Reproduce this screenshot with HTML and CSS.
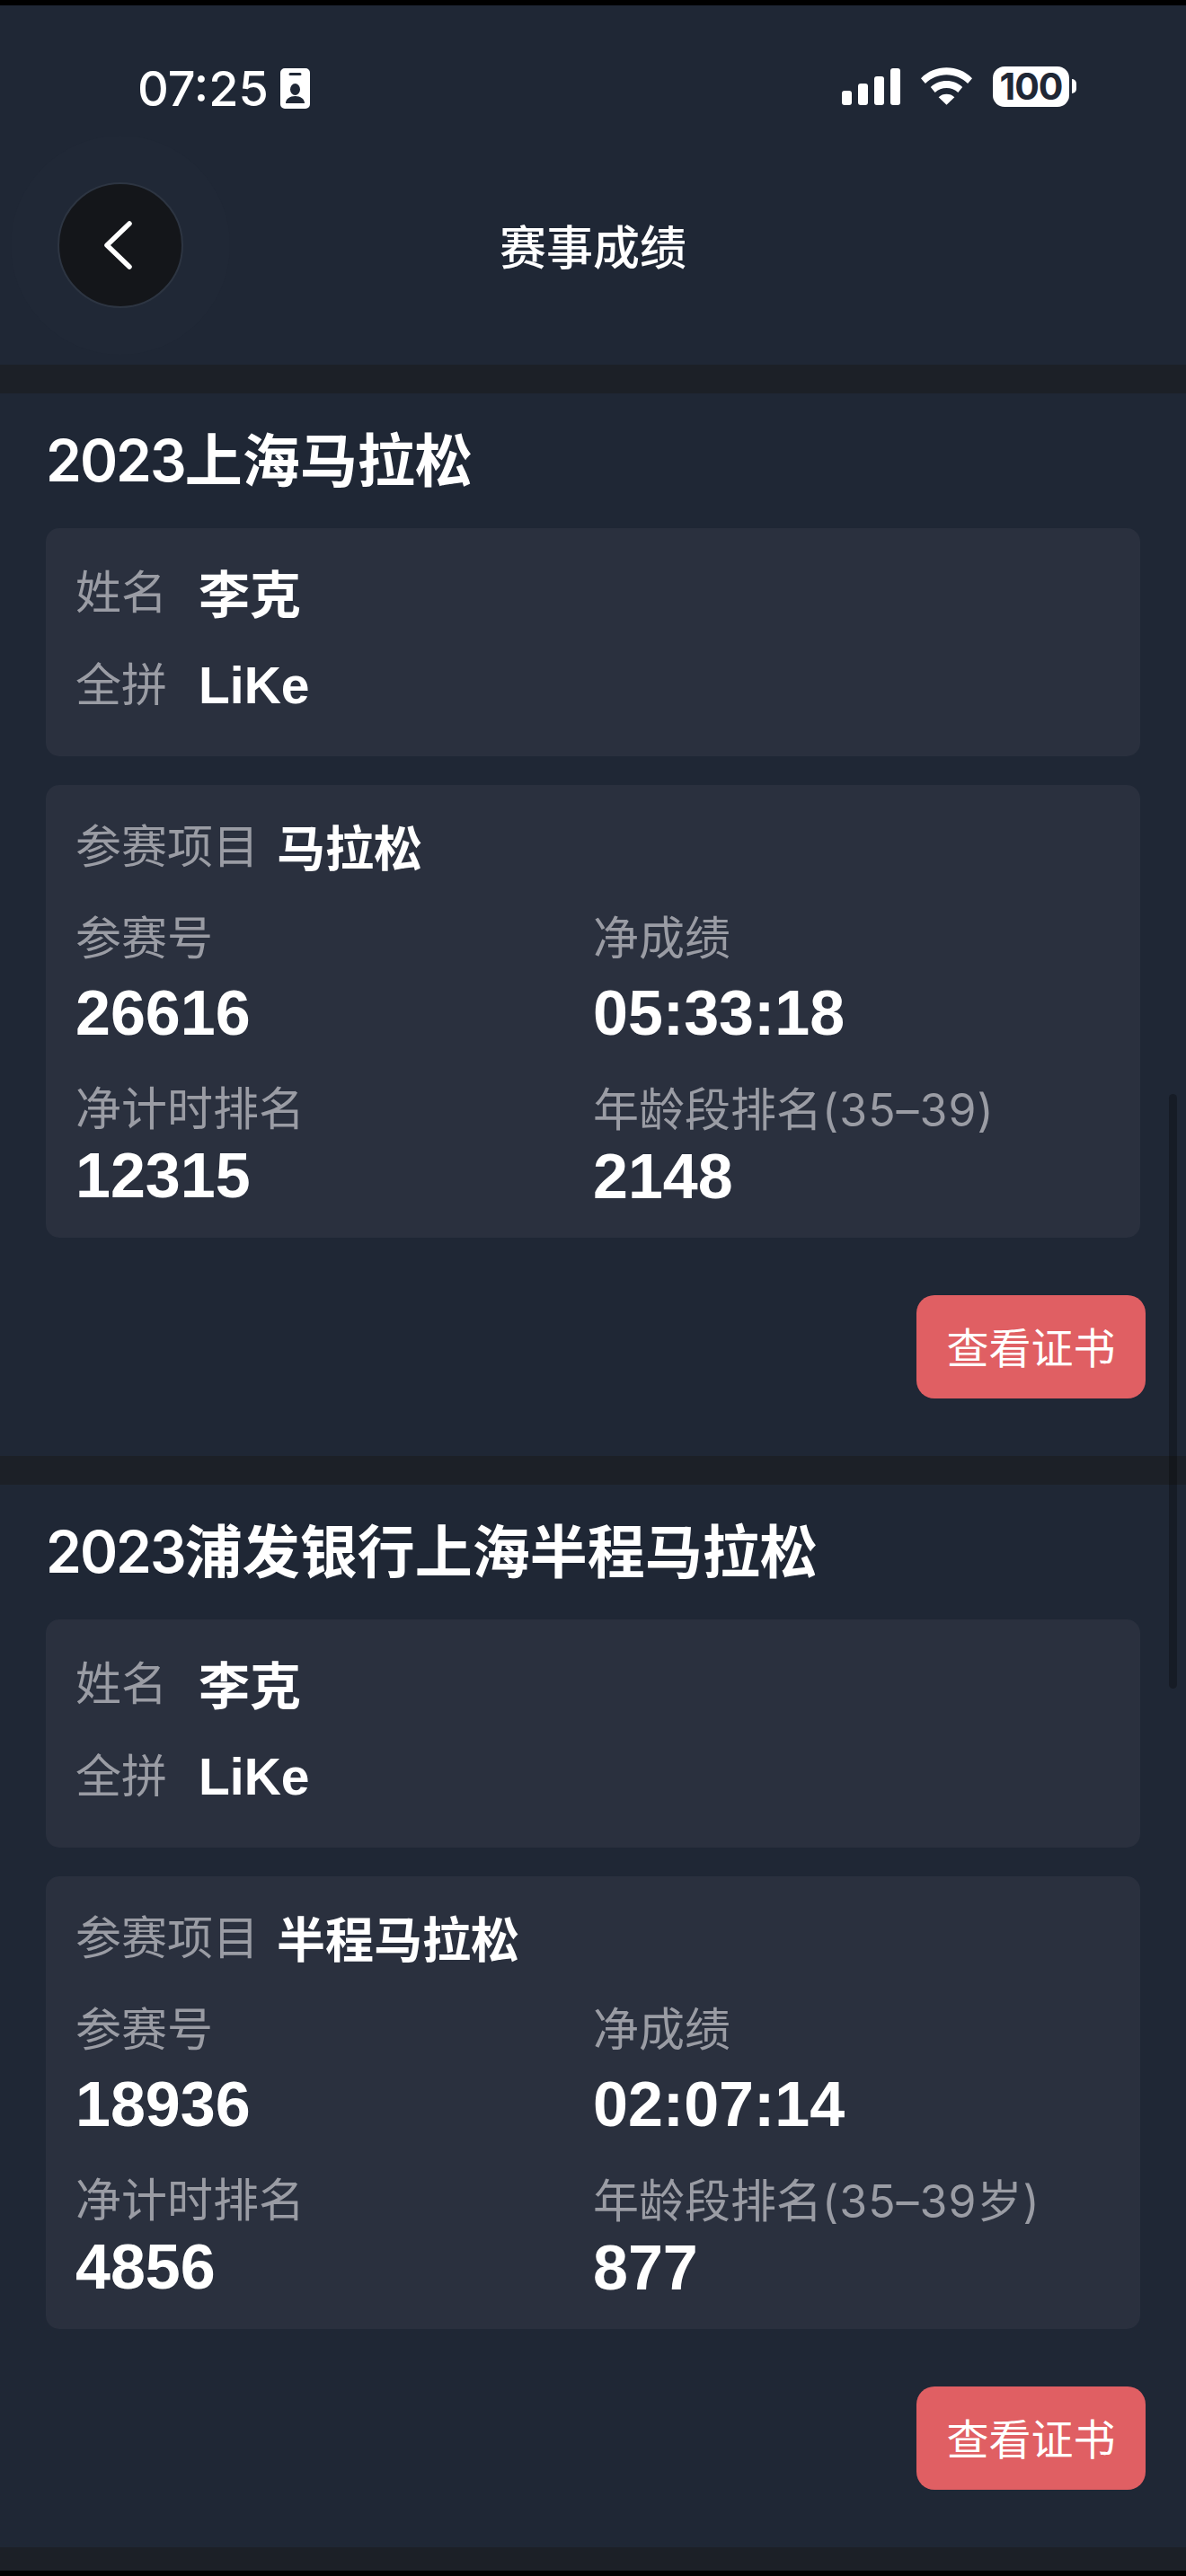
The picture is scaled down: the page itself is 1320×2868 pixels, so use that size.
FILE: index.html
```html
<!DOCTYPE html>
<html lang="zh-CN">
<head>
    <meta charset="UTF-8">
    <meta name="viewport" content="width=device-width, initial-scale=1.0">
    <title>赛事成绩</title>
    <link rel="stylesheet" href="styles.css">
</head>
<body>
    <div class="screen">
        <div class="statusbar">
            <div class="status-left">
                <span class="clock">07:25</span>
                <svg class="badge-icon" width="33" height="45" viewBox="0 0 33 45">
                    <path fill="#fff" fill-rule="evenodd" d="M5 0h23a5 5 0 0 1 5 5v35a5 5 0 0 1-5 5H5a5 5 0 0 1-5-5V5a5 5 0 0 1 5-5zM11 5a1.5 1.5 0 0 0 0 3h11a1.5 1.5 0 0 0 0-3zM16.500 17a5.500 6.500 0 1 0 0 13a5.500 6.500 0 1 0 0-13zM6 39h21c0-5-4.500-8-10.500-8S6 34 6 39z"/>
                </svg>
            </div>
            <div class="status-right">
                <svg width="65" height="41" viewBox="0 0 65 41">
                    <rect x="0" y="25" width="11" height="16" rx="3" fill="#fff"/>
                    <rect x="18" y="17" width="11" height="24" rx="3" fill="#fff"/>
                    <rect x="36" y="9" width="11" height="32" rx="3" fill="#fff"/>
                    <rect x="54" y="0" width="11" height="41" rx="3" fill="#fff"/>
                </svg>
                <svg class="wifi-icon" width="57" height="42" viewBox="0 0 58 42">
                    <path fill="#fff" d="M29 0c11 0 21 4 29 12l-5 6c-6.500-6.500-15-10-24-10S11.500 11.500 5 18l-5-6C8 4 18 0 29 0z"/>
                    <path fill="#fff" d="M29 15c7 0 13 2.500 18 7l-5 6c-3.500-3.200-8-5-13-5s-9.500 1.800-13 5l-5-6c5-4.500 11-7 18-7z"/>
                    <path fill="#fff" d="M29 30c3.500 0 6.500 1.200 9 3.500L29 42l-9-8.500c2.500-2.300 5.500-3.500 9-3.500z"/>
                </svg>
                <div class="battery">
                    <span class="battery-level">100</span>
                    <span class="battery-nub"></span>
                </div>
            </div>
        </div>

        <div class="navbar">
            <button class="back-btn">
                <svg width="32" height="54" viewBox="0 0 32 54">
                    <path d="M29 3L4 27l25 24" fill="none" stroke="#fff" stroke-width="5.500" stroke-linecap="round" stroke-linejoin="round"/>
                </svg>
            </button>
            <div class="nav-title">赛事成绩</div>
        </div>

        <div class="race">
            <h2 class="race-title"><span class="race-year">2023</span>上海马拉松</h2>
            <div class="card name-card">
                <div class="name-row"><span class="label">姓名</span><span class="name-value">李克</span></div>
                <div class="name-row"><span class="label">全拼</span><span class="name-value name-latin">LiKe</span></div>
            </div>
            <div class="card result-card">
                <div class="project"><span class="label">参赛项目</span><span class="project-value">马拉松</span></div>
                <div class="stats">
                    <div class="stat">
                        <div class="label">参赛号</div>
                        <div class="stat-value">26616</div>
                    </div>
                    <div class="stat">
                        <div class="label">净成绩</div>
                        <div class="stat-value">05:33:18</div>
                    </div>
                    <div class="stat stat-lower">
                        <div class="label">净计时排名</div>
                        <div class="stat-value">12315</div>
                    </div>
                    <div class="stat stat-lower">
                        <div class="label">年龄段排名<span class="age">(35–39)</span></div>
                        <div class="stat-value">2148</div>
                    </div>
                </div>
            </div>
            <div class="actions"><button class="cert-btn">查看证书</button></div>
        </div>

        <div class="race">
            <h2 class="race-title"><span class="race-year">2023</span>浦发银行上海半程马拉松</h2>
            <div class="card name-card">
                <div class="name-row"><span class="label">姓名</span><span class="name-value">李克</span></div>
                <div class="name-row"><span class="label">全拼</span><span class="name-value name-latin">LiKe</span></div>
            </div>
            <div class="card result-card">
                <div class="project"><span class="label">参赛项目</span><span class="project-value">半程马拉松</span></div>
                <div class="stats">
                    <div class="stat">
                        <div class="label">参赛号</div>
                        <div class="stat-value">18936</div>
                    </div>
                    <div class="stat">
                        <div class="label">净成绩</div>
                        <div class="stat-value">02:07:14</div>
                    </div>
                    <div class="stat stat-lower">
                        <div class="label">净计时排名</div>
                        <div class="stat-value">4856</div>
                    </div>
                    <div class="stat stat-lower">
                        <div class="label">年龄段排名<span class="age">(35–39岁)</span></div>
                        <div class="stat-value">877</div>
                    </div>
                </div>
            </div>
            <div class="actions"><button class="cert-btn">查看证书</button></div>
        </div>

        <div class="scroll-thumb"></div>
    </div>
</body>
</html>
```

FILE: styles.css
```css
* {
    box-sizing: border-box;
}
html, body {
    margin: 0;
    height: 2868px;
    overflow: hidden;
    background-color: #000;
}
body {
    padding: 6px 0;
    font-family: "Liberation Sans", "Noto Sans CJK SC", sans-serif;
    color: #fff;
}
.screen {
    position: relative;
    height: 2856px;
    overflow: hidden;
    background-color: #1c2027;
}

/* status bar */
.statusbar {
    height: 130px;
    padding: 0 130px 0 153px;
    display: flex;
    align-items: flex-start;
    justify-content: space-between;
    background-color: #1f2735;
}
.status-left {
    display: flex;
    align-items: center;
    padding-top: 70px;
}
.clock {
    font-family: Inter, "Liberation Sans", sans-serif;
    font-size: 54px;
    font-weight: 500;
    line-height: 45px;
}
.badge-icon {
    margin-left: 13px;
}
.status-right {
    display: flex;
    align-items: flex-start;
    padding-top: 70px;
}
.wifi-icon {
    margin-left: 23px;
    margin-top: -1px;
}
.battery {
    position: relative;
    width: 85px;
    height: 45px;
    margin-left: 23px;
    margin-top: -2px;
    background-color: #fff;
    border-radius: 13px;
    text-align: center;
}
.battery-level {
    font-family: Inter, "Liberation Sans", sans-serif;
    font-size: 41px;
    font-weight: 700;
    line-height: 45px;
    letter-spacing: -1px;
    color: #1f2735;
}
.battery-nub {
    position: absolute;
    left: 88px;
    top: 14px;
    width: 5px;
    height: 16px;
    background-color: #fff;
    border-radius: 0 5px 5px 0;
}

/* nav */
.navbar {
    height: 270px;
    padding: 67px 0 0 64px;
    position: relative;
    background-color: #1f2735;
}
.back-btn {
    width: 140px;
    height: 140px;
    padding: 0;
    display: flex;
    align-items: center;
    justify-content: center;
    background-color: #14161a;
    border: 2px solid #2d3542;
    border-radius: 50%;
    box-shadow: 0 0 0 52px #202836;
}
.back-btn svg {
    margin-right: 6px;
}
.nav-title {
    position: absolute;
    left: 0;
    right: 0;
    top: 111px;
    text-align: center;
    font-size: 52px;
    font-weight: 500;
    line-height: 60px;
}

/* race section */
.race {
    height: 1183px;
    margin-top: 32px;
    padding: 0 51px;
    background-color: #1f2735;
}
.race-title {
    margin: 0;
    padding-top: 35px;
    font-family: Inter, "Noto Sans CJK SC", sans-serif;
    font-size: 64px;
    font-weight: 600;
    line-height: 80px;
    height: 150px;
}
.race-year {
    letter-spacing: -2px;
}
.card {
    background-color: #2a303e;
    border-radius: 15px;
    padding: 0 33px;
}
.name-card {
    height: 254px;
    padding-top: 20px;
}
.name-row {
    height: 103px;
    display: flex;
    align-items: center;
}
.label {
    font-size: 51px;
    color: #9a9ca4;
    line-height: 60px;
    padding-top: 2px;
}
.age {
    font-family: Inter, "Liberation Sans", "Noto Sans CJK SC", sans-serif;
    font-size: 50px;
    letter-spacing: 1px;
}
.name-value {
    margin-left: 35px;
    margin-top: -4px;
    font-size: 57px;
    font-weight: 700;
}
.name-latin {
    margin-top: 0;
}
.result-card {
    height: 504px;
    margin-top: 32px;
    padding-top: 34px;
}
.project {
    height: 70px;
    display: flex;
    align-items: center;
}
.project-value {
    margin-left: 20px;
    margin-top: -3px;
    font-size: 54px;
    font-weight: 700;
}
.stats {
    display: grid;
    grid-template-columns: 1fr 1fr;
    margin-top: 36px;
}
.stat-value {
    margin-top: 12px;
    font-size: 70px;
    font-weight: 700;
    line-height: 80px;
}
.stat-lower {
    margin-top: 36px;
}
.stat-lower .stat-value {
    margin-top: 3px;
}
.actions {
    display: flex;
    justify-content: flex-end;
    margin-top: 64px;
    margin-right: -6px;
}
.cert-btn {
    width: 255px;
    height: 115px;
    padding: 0 0 5px;
    background-color: #e05f63;
    border: 0;
    border-radius: 20px;
    font-family: inherit;
    font-size: 47px;
    color: #fff;
}

.scroll-thumb {
    position: absolute;
    right: 10px;
    top: 1212px;
    width: 9px;
    height: 662px;
    background-color: rgba(0, 0, 0, 0.28);
    border-radius: 5px;
}
```
